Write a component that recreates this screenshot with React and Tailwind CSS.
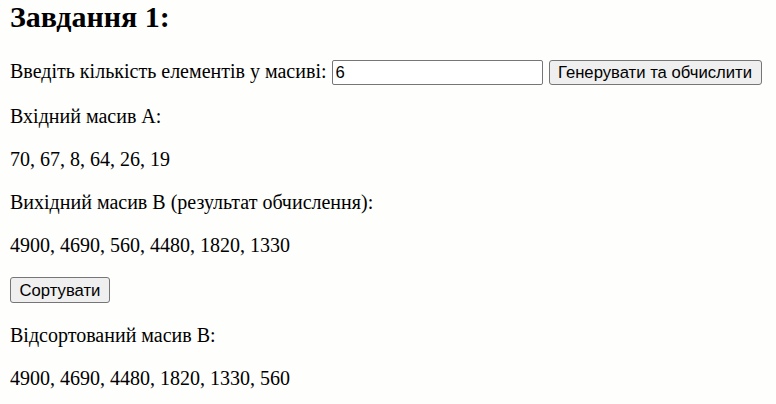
export default function App() {
  const serif = { fontFamily: '"Liberation Serif", "Times New Roman", serif' };
  return (
    <div
      className="min-h-[404px] w-full bg-[#fefefc] px-[10px] text-black"
      style={serif}
    >
      <h2 className="m-0 text-[30px] font-bold leading-[34.5px]">Завдання 1:</h2>
      <div className="mt-[25px] flex items-baseline text-[20px] leading-[23px]">
        <span>Введіть кількість елементів у масиві:</span>
        <input
          type="text"
          defaultValue="6"
          className="ml-[5px] h-[25px] w-[211px] rounded-[2px] border border-[#767676] bg-white px-[3px] text-[16.67px] leading-[19px] text-black outline-none"
          style={{ fontFamily: '"Liberation Sans", Arial, sans-serif' }}
        />
        <button
          className="ml-[6px] h-[25px] w-[213px] rounded-[3px] border border-[#767676] bg-[#efefef] px-[7px] text-[16.67px] leading-[19px] text-black"
          style={{ fontFamily: '"Liberation Sans", Arial, sans-serif' }}
        >
          Генерувати та обчислити
        </button>
      </div>
      <p className="mt-[20px] text-[20px] leading-[23px]">Вхідний масив A:</p>
      <p className="mt-[20px] text-[20px] leading-[23px]">70, 67, 8, 64, 26, 19</p>
      <p className="mt-[20px] text-[20px] leading-[23px]">Вихідний масив B (результат обчислення):</p>
      <p className="mt-[20px] text-[20px] leading-[23px]">4900, 4690, 560, 4480, 1820, 1330</p>
      <div className="mt-[20px] flex">
        <button
          className="h-[26px] w-[100px] rounded-[3px] border border-[#767676] bg-[#efefef] px-[7px] text-[16.67px] leading-[19px] text-black"
          style={{ fontFamily: '"Liberation Sans", Arial, sans-serif' }}
        >
          Сортувати
        </button>
      </div>
      <p className="mt-[21px] text-[20px] leading-[23px]">Відсортований масив B:</p>
      <p className="mt-[20px] text-[20px] leading-[23px]">4900, 4690, 4480, 1820, 1330, 560</p>
    </div>
  );
}
